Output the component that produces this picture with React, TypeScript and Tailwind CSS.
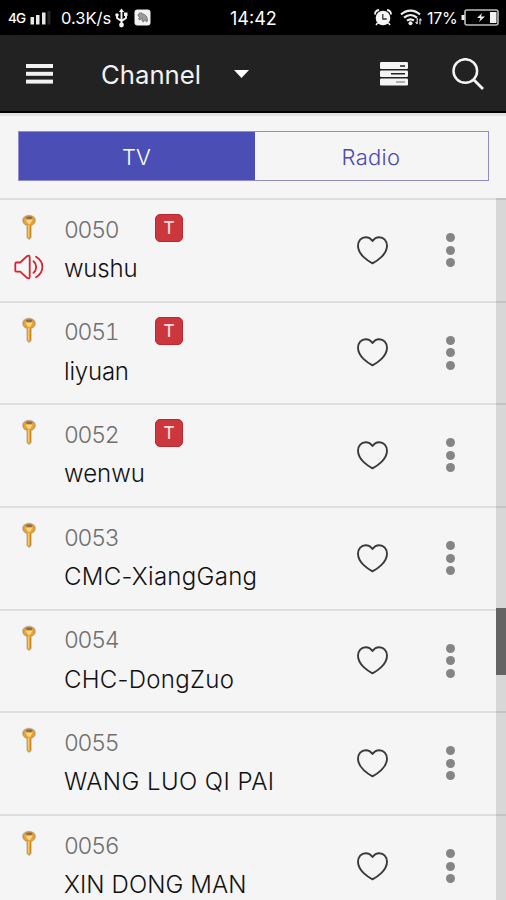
type Channel = {
  number: string;
  name: string;
  tracking: string;
  teletext?: boolean;
  playing?: boolean;
};

const channels: Channel[] = [
  { number: '0050', name: 'wushu', tracking: 'tracking-[-0.2px]', teletext: true, playing: true },
  { number: '0051', name: 'liyuan', tracking: 'tracking-[-0.2px]', teletext: true },
  { number: '0052', name: 'wenwu', tracking: 'tracking-normal', teletext: true },
  { number: '0053', name: 'CMC-XiangGang', tracking: 'tracking-[0.3px]' },
  { number: '0054', name: 'CHC-DongZuo', tracking: 'tracking-[0.3px]' },
  { number: '0055', name: 'WANG LUO QI PAI', tracking: 'tracking-[0.43px]' },
  { number: '0056', name: 'XIN DONG MAN', tracking: 'tracking-[0.1px]' },
];

function KeyIcon() {
  return (
    <svg className="block h-[27px] w-4" viewBox="0 0 16 27" fill="none">
      <path d="M8 .8C3.900.8 1 3.100 1 6.300c0 2.800 1.800 4.900 4.300 5.700l.2 12L8 26.300l2.600-2.300V12c2.500-.8 4.400-2.900 4.400-5.700C15 3.100 12.100.8 8 .8Z" fill="#c9cbd4" />
      <path d="M8 1.800C4.500 1.800 2.100 3.800 2.100 6.400c0 2.400 1.600 4.200 4.200 4.800v12.200L8 25l1.800-1.500V11.200c2.500-.6 4.100-2.400 4.100-4.800C13.900 3.800 11.500 1.800 8 1.800Z" fill="#e8a32e" stroke="#b5822f" strokeWidth=".6" />
      <path d="M4.500 5.800h7L9.300 9.700H7Z" fill="#ffd68a" />
      <ellipse cx="8.200" cy="3.800" rx="3.200" ry="1.200" fill="#8c6a58" />
      <path d="M7.600 11v12.500" stroke="#ffc65a" strokeWidth="1.400" />
      <path d="M9.400 12v11" stroke="#c27c1e" strokeWidth=".7" />
    </svg>
  );
}

function SpeakerIcon() {
  return (
    <svg className="block h-[26px] w-[30px]" viewBox="0 0 30 26" fill="none" stroke="#d6232d" strokeWidth="1.800" strokeLinejoin="round" strokeLinecap="round">
      <path d="M2.500 8.500h3.700L13 2.200q2.700-1.700 2.700 1.200v19.200q0 2.900-2.700 1.200l-6.800-6.100H2.500q-1.200 0-1.200-1.300V9.700q0-1.200 1.200-1.200Z" />
      <path d="M19.500 7.300c3.600 3 3.600 8.500 0 11.500" />
      <path d="M22 2.800c8.500 5 8.500 15.500 0 20.500" />
    </svg>
  );
}

function HeartIcon() {
  return (
    <svg className="block h-[30px] w-8" viewBox="0 0 32 30" fill="none" stroke="#3a3a3a" strokeWidth="1.900" strokeLinejoin="round">
      <path d="M15.500 28.300C11.500 26.300 1 19.800 1 10.800 1 5.800 4.300 2.200 8.700 2.200c2.900 0 5.100 1.300 6.800 3.900 1.700-2.600 3.900-3.900 6.800-3.900 4.400 0 7.700 3.600 7.700 8.600 0 9-10.500 15.500-14.500 17.500Z" />
    </svg>
  );
}

function StatusBar() {
  return (
    <div className="flex h-[35px] shrink-0 items-center bg-black text-white">
      <span className="mt-px ml-2 w-[19px] text-[13.500px] font-medium tracking-[-0.8px]">4G</span>
      <svg className="ml-[3px] h-4 w-[22px]" viewBox="0 0 22 16" fill="#e8e8e8">
        <rect x="0.500" y="7" width="3.500" height="7.500" />
        <rect x="6" y="5" width="3.500" height="9.500" />
        <rect x="12" y="2.500" width="3.500" height="12" />
        <rect x="17.500" y="1" width="3" height="13.500" fill="#262626" />
      </svg>
      <span className="mt-px ml-[9px] w-[52px] text-[16.500px] whitespace-nowrap">0.3K/s</span>
      <svg className="ml-0.5 h-5 w-[13px]" viewBox="0 0 13 20" fill="none" stroke="#f2f2f2" strokeWidth="1.900">
        <path d="M6.500 3v14M2 7v3l4.500 3 4.500-3V6" />
        <path d="m3.800 4 2.700-3.500L9.200 4Z" fill="#f2f2f2" stroke="none" />
        <circle cx="6.500" cy="17" r="2.400" fill="#f2f2f2" stroke="none" />
        <circle cx="2" cy="7" r="1.800" fill="#f2f2f2" stroke="none" />
        <path d="M9 4.500h3.500V8H9Z" fill="#f2f2f2" stroke="none" />
      </svg>
      <svg className="ml-[6px] h-[17px] w-[17px]" viewBox="0 0 17 17">
        <rect x=".5" y=".5" width="16" height="16" rx="3" fill="#f2f2f2" />
        <path d="M4 7c0-3 3-4.200 4.500-2.200C11 5 14 8 13.500 12l-1.500 1v-2l-2 .5-.5 1.500-1.500-1V9.500L5.500 11l-1-1.500L6 8Z" fill="#9b9b9b" stroke="#555" strokeWidth=".6" />
      </svg>
      <span className="mt-[2px] ml-[79px] w-[49px] text-[18px] whitespace-nowrap">14:42</span>
      <svg className="ml-[95px] h-[17px] w-[18px]" viewBox="0 0 18 17" fill="none">
        <circle cx="9" cy="9" r="7.300" fill="#f5f5f5" />
        <path d="M1 5.500Q1 1.500 5 1M17 5.500Q17 1.500 13 1" stroke="#f5f5f5" strokeWidth="1.800" />
        <path d="M3.500 14 2 16M14.500 14l1.500 2" stroke="#f5f5f5" strokeWidth="1.500" />
        <path d="M8.800 5v5h4" stroke="#333" strokeWidth="1.300" />
      </svg>
      <svg className="ml-[8px] h-[17px] w-[22px]" viewBox="0 0 22 17" fill="none" stroke="#ededed" strokeWidth="2.200">
        <path d="M1 5.500C6.500.2 14.500.2 20 5.500M4 8.700c4-3.500 9-3.500 13 0M7 11.700c2.500-2 4.500-2 7 0" />
        <circle cx="10.500" cy="14.300" r="2" fill="#ededed" stroke="none" />
        <path d="M17.200 9v6m-1.700-2 1.700 2M20 15.500v-6m0 0 1.500 2" strokeWidth="1.100" />
      </svg>
      <span className="mt-px ml-[5px] w-[31px] text-[16px] tracking-[-0.3px] whitespace-nowrap">17%</span>
      <svg className="ml-[3px] h-[17px] w-[38px]" viewBox="0 0 38 17" fill="none">
        <rect x="4" y="1" width="33" height="15" rx="2" stroke="#bdbdbd" strokeWidth="1.600" />
        <path d="M.5 6h3v5h-3Z" fill="#eee" />
        <rect x="29" y="3" width="6.500" height="11" fill="#f2f2f2" />
        <path d="m21 4-5 5h3.500L18 13l6-5.500h-4Z" fill="#f2f2f2" />
      </svg>
    </div>
  );
}

function Toolbar() {
  return (
    <header className="flex h-[78px] shrink-0 items-center border-b-2 border-black bg-[#222222] pt-[2px] text-[#f2f2f2]">
      <svg className="ml-[26px] h-5 w-[27px]" viewBox="0 0 27 20" fill="#f2f2f2">
        <rect y="0" width="27" height="4" />
        <rect y="7.800" width="27" height="4" />
        <rect y="15.600" width="27" height="4" />
      </svg>
      <span className="mt-[2px] ml-[48px] w-[100px] text-[25.700px] leading-8 whitespace-nowrap">Channel</span>
      <svg className="ml-[33px] h-2 w-[15px]" viewBox="0 0 15 8" fill="#fff">
        <path d="M0 0h15L7.500 8Z" />
      </svg>
      <svg className="ml-[131px] h-6 w-[28px]" viewBox="0 0 28 24">
        <g fill="#f4f4f4">
          <rect width="28" height="7" rx="1.200" />
          <rect y="8.500" width="28" height="6.500" rx="1.200" />
          <rect y="16.500" width="28" height="7" rx="1.200" />
        </g>
        <path d="M20 4h5M11 11.700h14" stroke="#222" strokeWidth="1.500" />
        <path d="M16 20h9" stroke="#999" strokeWidth="1.500" />
      </svg>
      <svg className="ml-[43.500px] h-8 w-8" viewBox="0 0 32 32" fill="none" stroke="#f4f4f4">
        <circle cx="13.300" cy="13" r="11.800" strokeWidth="2.500" />
        <path d="m22 22 9 9" strokeWidth="2.800" />
      </svg>
    </header>
  );
}

function ChannelRow({ channel }: { channel: Channel }) {
  return (
    <li className="flex h-[102.700px] shrink-0 border-t-2 border-[#dedede]">
      <div className="flex w-16 shrink-0 flex-col pt-[14px] pl-[13.500px]">
        <div className="pl-[7px]"><KeyIcon /></div>
        {channel.playing && <div className="pt-[12.500px]"><SpeakerIcon /></div>}
      </div>
      <div className="w-[293px] shrink-0 pt-[11.500px]">
        <div className="flex h-9 items-center">
          <span className="w-[91px] text-[23px] leading-9 font-light tracking-[-1.300px] text-[#6f6f6f] tabular-nums">{channel.number}</span>
          {channel.teletext && (
            <span className="mb-[3px] flex h-7 w-7 items-center justify-center rounded-[5px] border border-[#bd2830] bg-[#cc373e] pt-px text-[17px] leading-none font-medium text-[#f7dcdc]">T</span>
          )}
        </div>
        <p className={`mt-[3.500px] text-[24px] leading-9 font-light whitespace-nowrap text-[#111] ${channel.tracking}`}>{channel.name}</p>
      </div>
      <button aria-label="Favourite" className="mt-[34.500px] h-[30px] w-8 shrink-0"><HeartIcon /></button>
      <button aria-label="More" className="mt-[33px] ml-[56.500px] flex h-[34px] w-[9px] shrink-0 flex-col items-center justify-between">
        <span className="h-[9px] w-[9px] rounded-full bg-[#858585]" />
        <span className="h-[9px] w-[9px] rounded-full bg-[#858585]" />
        <span className="h-[9px] w-[9px] rounded-full bg-[#858585]" />
      </button>
    </li>
  );
}

export default function App() {
  return (
    <div className="flex h-[900px] w-[506px] flex-col overflow-hidden bg-[#f5f5f5] font-['Inter','Liberation_Sans',sans-serif]">
      <StatusBar />
      <Toolbar />
      <nav className="flex h-[85px] shrink-0 border-t-[3px] border-[#e2e2e2] pt-[15px] pl-[18px]">
        <div className="flex h-[50px] w-[471px] border border-[#8f8cc9] text-[22px] font-light">
          <button className="w-[236px] bg-[#4b4fb5] pt-[2px] pr-px text-white">TV</button>
          <button className="flex-1 pt-[2px] pr-px tracking-[0.3px] text-[#4e49ac]">Radio</button>
        </div>
      </nav>
      <main className="relative flex min-h-0 flex-1 flex-col overflow-hidden">
        <ul className="flex flex-col">
          {channels.map((channel) => (
            <ChannelRow key={channel.number} channel={channel} />
          ))}
        </ul>
        <div className="absolute inset-y-0 right-0 w-[10px] bg-black/12">
          <div className="mt-[410px] h-[67px] bg-[#646464]" />
        </div>
      </main>
    </div>
  );
}
